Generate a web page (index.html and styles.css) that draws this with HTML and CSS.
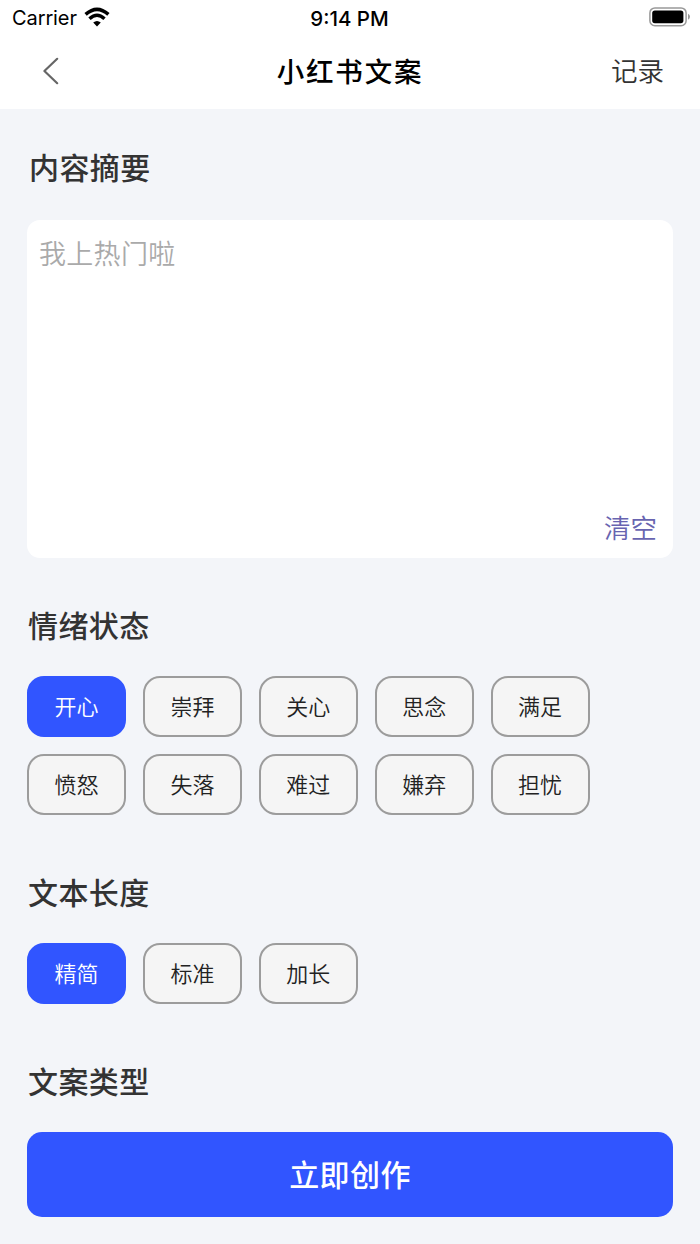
FILE: index.html
```html
<!DOCTYPE html>
<html lang="zh-CN">
<head>
    <meta charset="UTF-8">
    <title>小红书文案</title>
    <link rel="stylesheet" href="styles.css">
</head>
<body>
    <header class="header">
        <div class="status-bar">
            <div class="carrier">
                <span>Carrier</span>
                <svg class="wifi" width="26" height="20" viewBox="0 0 26 20">
                    <path d="M1.6 7.4 Q13 -2.8 24.4 7.4" fill="none" stroke="#000" stroke-width="3.5"/>
                    <path d="M5.5 11.8 Q13 4.8 20.5 11.8" fill="none" stroke="#000" stroke-width="3.4"/>
                    <path d="M9.2 15.6 Q13 12.2 16.8 15.6 L13 19.4 Z"/>
                </svg>
            </div>
            <div class="time">9:14 PM</div>
            <svg class="battery" width="42" height="20" viewBox="0 0 42 20">
                <rect x="0.9" y="0.9" width="36.2" height="17.8" rx="5" fill="none" stroke="#999" stroke-width="1.5"/>
                <rect x="3.2" y="3.4" width="31.2" height="12.8" rx="2.6"/>
                <path d="M39 6.8 Q41 7.8 41 9.8 Q41 11.8 39 12.8 Z" fill="#999"/>
            </svg>
        </div>
        <nav class="nav-bar">
            <svg class="back" width="20" height="30" viewBox="0 0 20 30">
                <path d="M15.2 2.8 L2.4 15 L15.2 27.2" fill="none" stroke="#666" stroke-width="2.2" stroke-linecap="round" stroke-linejoin="round"/>
            </svg>
            <h1>小红书文案</h1>
            <a class="record">记录</a>
        </nav>
    </header>

    <main class="container">
        <h2 class="summary-title">内容摘要</h2>
        <div class="input-box">
            <p class="placeholder">我上热门啦</p>
            <a class="clear">清空</a>
        </div>

        <h2 class="mood-title">情绪状态</h2>
        <div class="tags">
            <button class="tag active">开心</button>
            <button class="tag">崇拜</button>
            <button class="tag">关心</button>
            <button class="tag">思念</button>
            <button class="tag">满足</button>
            <button class="tag">愤怒</button>
            <button class="tag">失落</button>
            <button class="tag">难过</button>
            <button class="tag">嫌弃</button>
            <button class="tag">担忧</button>
        </div>

        <h2 class="length-title">文本长度</h2>
        <div class="tags">
            <button class="tag active">精简</button>
            <button class="tag">标准</button>
            <button class="tag">加长</button>
        </div>

        <h2 class="type-title">文案类型</h2>
        <button class="submit">立即创作</button>
    </main>
</body>
</html>
```
FILE: styles.css
```css
* {
    box-sizing: border-box;
}
body {
    margin: 0;
    min-height: 1244px;
    font-family: Inter, "Noto Sans CJK SC", sans-serif;
    background: #f3f5f9;
    color: #333;
}
h1, h2, p {
    margin: 0;
}
button {
    margin: 0;
    border: none;
    font-family: inherit;
}
.header {
    height: 109px;
    background: #fff;
}
.status-bar {
    display: grid;
    grid-template-columns: 1fr auto 1fr;
    align-items: center;
    height: 36px;
    padding: 0 9px 0 12px;
    font-size: 20px;
    color: #000;
}
.carrier {
    display: flex;
    align-items: center;
    gap: 7px;
    letter-spacing: -0.1px;
}
.time {
    margin-right: 4px;
    font-size: 20.5px;
    font-weight: 500;
}
.battery {
    justify-self: end;
    margin-top: -2px;
}
.wifi {
    margin-top: -3px;
}
.nav-bar {
    display: grid;
    grid-template-columns: 1fr auto 1fr;
    align-items: center;
    height: 70px;
    padding: 0 36px 0 42px;
}
h1 {
    margin-right: 6px;
    padding-top: 1px;
    font-size: 27.5px;
    font-weight: 500;
    letter-spacing: 1.8px;
    line-height: 40px;
    color: #000;
}
.record {
    justify-self: end;
    font-size: 26.5px;
    font-weight: 350;
    line-height: 40px;
}
.container {
    padding: 38px 27px 0;
}
h2 {
    padding-left: 1px;
    font-size: 30px;
    font-weight: 500;
    letter-spacing: 0.4px;
    line-height: 42px;
}
.summary-title {
    padding-left: 2px;
}
.input-box {
    display: flex;
    flex-direction: column;
    justify-content: space-between;
    width: 646px;
    height: 338px;
    margin-top: 31px;
    padding: 15px 16px 10px 12px;
    border-radius: 13px;
    background: #fff;
}
.placeholder {
    font-size: 27px;
    font-weight: 350;
    letter-spacing: 0.3px;
    line-height: 40px;
    color: #aaa;
}
.clear {
    align-self: flex-end;
    font-size: 26.5px;
    font-weight: 350;
    line-height: 40px;
    color: #6864b0;
}
.mood-title {
    margin-top: 47px;
}
.tags {
    display: grid;
    grid-template-columns: repeat(5, 99px);
    gap: 17px 16.9px;
    margin-top: 29px;
}
.tag {
    height: 61px;
    padding: 0 0 4px;
    border: 2px solid #9c9c9c;
    border-radius: 17px;
    background: #f5f5f5;
    font-size: 22px;
    font-weight: 350;
    color: #222;
}
.tag.active {
    border-color: #3155ff;
    background: #3155ff;
    color: #fff;
}
.length-title {
    margin-top: 57px;
}
.type-title {
    margin-top: 57px;
}
.submit {
    display: block;
    width: 646px;
    height: 85px;
    margin-top: 29px;
    padding: 0 0 4px;
    border-radius: 15px;
    background: #3155ff;
    font-size: 30px;
    font-weight: 500;
    letter-spacing: 0.4px;
    color: #fff;
}
```
